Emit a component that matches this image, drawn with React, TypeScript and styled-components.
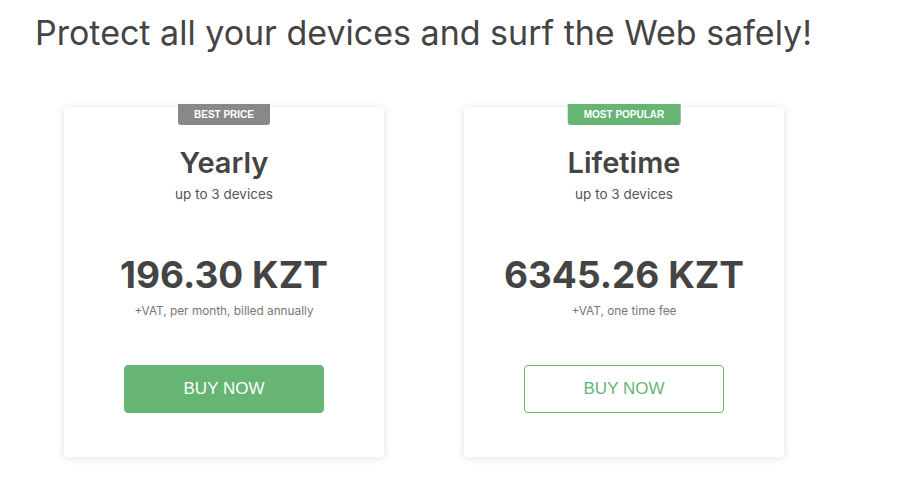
import styled, { createGlobalStyle } from "styled-components";

const Global = createGlobalStyle`
    body {
        margin: 0;
        background: #ffffff;
        font-family: Inter, "Noto Sans", sans-serif;
        color: #444444;
    }
`

const Page = styled.div`
    padding: 12px 0 20px 35px;
`

const Heading = styled.h1`
    margin: 0;
    font-size: 34px;
    font-weight: 400;
    line-height: 42px;
    color: #444;
`

const Cards = styled.div`
    display: flex;
    gap: 80px;
    margin-top: 53px;
    padding-left: 29px;
`

const Card = styled.div`
    position: relative;
    width: 320px;
    height: 350px;
    background: #fff;
    border-radius: 4px;
    box-shadow: 0 1px 8px rgba(0, 0, 0, 0.12);
    display: flex;
    flex-direction: column;
    align-items: center;
    padding-top: 38px;
    box-sizing: border-box;
`

const Badge = styled.div<{ $color: string }>`
    position: absolute;
    top: -3px;
    left: 50%;
    transform: translateX(-50%);
    background: ${(p) => p.$color};
    color: #fff;
    font-family: "Liberation Sans", Arial, sans-serif;
    font-weight: 700;
    font-size: 10px;
    line-height: 21px;
    padding: 0 16px;
    border-radius: 0 0 3px 3px;
`

const Title = styled.div`
    font-size: 29px;
    font-weight: 600;
    line-height: 36px;
    color: #444;
`

const Devices = styled.div`
    font-size: 13.5px;
    line-height: 18px;
    margin-top: 4px;
    color: #555;
`

const Price = styled.div`
    margin-top: 50px;
    font-size: 37px;
    font-weight: 700;
    line-height: 44px;
    color: #444;
`

const Note = styled.div`
    font-size: 11.8px;
    line-height: 16px;
    color: #777;
    margin-top: 6px;
`

const Button = styled.button<{ $outline?: boolean }>`
    margin-top: 46px;
    width: 200px;
    height: 48px;
    border-radius: 4px;
    font-family: "Liberation Sans", Arial, sans-serif;
    font-size: 17px;
    cursor: pointer;
    background: ${(p) => (p.$outline ? "#fff" : "#66b574")};
    color: ${(p) => (p.$outline ? "#66b574" : "#fff")};
    border: 1px solid #66b574;
`

const plans = [
    { badge: "BEST PRICE", badgeColor: "#888888", title: "Yearly", price: "196.30 KZT", note: "+VAT, per month, billed annually", outline: false },
    { badge: "MOST POPULAR", badgeColor: "#66b574", title: "Lifetime", price: "6345.26 KZT", note: "+VAT, one time fee", outline: true },
]

const App = () => {
    return (
        <>
            <Global />
            <Page>
                <Heading>Protect all your devices and surf the Web safely!</Heading>
                <Cards>
                    {plans.map((p) => (
                        <Card key={p.title}>
                            <Badge $color={p.badgeColor}>{p.badge}</Badge>
                            <Title>{p.title}</Title>
                            <Devices>up to 3 devices</Devices>
                            <Price>{p.price}</Price>
                            <Note>{p.note}</Note>
                            <Button $outline={p.outline}>BUY NOW</Button>
                        </Card>
                    ))}
                </Cards>
            </Page>
        </>
    );
};

export default App;
